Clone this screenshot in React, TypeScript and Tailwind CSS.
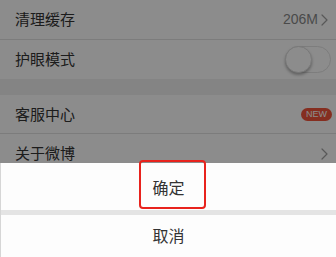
import React from "react";

const font = { fontFamily: '"Noto Sans CJK SC", "Noto Sans", sans-serif' };

function Chevron() {
  return (
    <svg width="7" height="12" viewBox="0 0 7 12" fill="none">
      <path d="M1 1l5 5-5 5" stroke="#a0a0a0" strokeWidth="1.2" strokeLinecap="round" strokeLinejoin="round" />
    </svg>
  );
}

export default function App() {
  return (
    <div className="relative w-[336px] h-[257px] overflow-hidden bg-[#f0f0f0]" style={font}>
      <div className="flex flex-col">
        <div className="h-[40px] bg-white border-b border-[#e2e2e2] flex items-center justify-between pl-[15px] pr-[8px]">
          <span className="text-[15px] text-[#333]">清理缓存</span>
          <div className="flex items-center gap-[3px]">
            <span className="text-[14px] text-[#888]" style={{ fontFamily: '"Liberation Sans", Arial, sans-serif' }}>206M</span>
            <Chevron />
          </div>
        </div>
        <div className="h-[39px] bg-white flex items-center justify-between pl-[15px] pr-[5px]">
          <span className="text-[15px] text-[#333]">护眼模式</span>
          <div className="w-[46px] h-[27px] rounded-full border border-[#e3e3e3] bg-white flex items-center">
            <div className="w-[27px] h-[27px] -ml-[1px] rounded-full bg-white border border-[#dcdcdc] shadow-[0_2px_3px_rgba(0,0,0,0.3)]" />
          </div>
        </div>
        <div className="h-[16px]" />
        <div className="h-[39px] bg-white border-b border-[#e2e2e2] flex items-center justify-between pl-[15px] pr-[4px]">
          <span className="text-[15px] text-[#333]">客服中心</span>
          <span className="w-[31px] h-[13px] rounded-full bg-[#f2553b] text-white text-[9px] leading-[13px] text-center" style={{ fontFamily: '"Liberation Sans", Arial, sans-serif' }}>NEW</span>
        </div>
        <div className="h-[39px] bg-white flex items-center justify-between pl-[15px] pr-[8px]">
          <span className="text-[15px] text-[#333]">关于微博</span>
          <Chevron />
        </div>
      </div>
      <div className="absolute inset-0 bg-black/45" />
      <div className="absolute left-0 right-0 top-[163px] bottom-0 flex flex-col bg-[#e4e4e4] border-l border-[#d6d6d6]">
        <div className="h-[47px] bg-[#fdfdfd] flex items-center justify-center">
          <span className="text-[16px] text-[#333]">确定</span>
        </div>
        <div className="h-[5px]" />
        <div className="flex-1 bg-[#fdfdfd] flex items-center justify-center pb-[2px]">
          <span className="text-[16px] text-[#333]">取消</span>
        </div>
      </div>
      <div className="absolute left-[139px] top-[160px] w-[67px] h-[49px] rounded-[4px] border-[2px] border-[#e8231d]" />
    </div>
  );
}
